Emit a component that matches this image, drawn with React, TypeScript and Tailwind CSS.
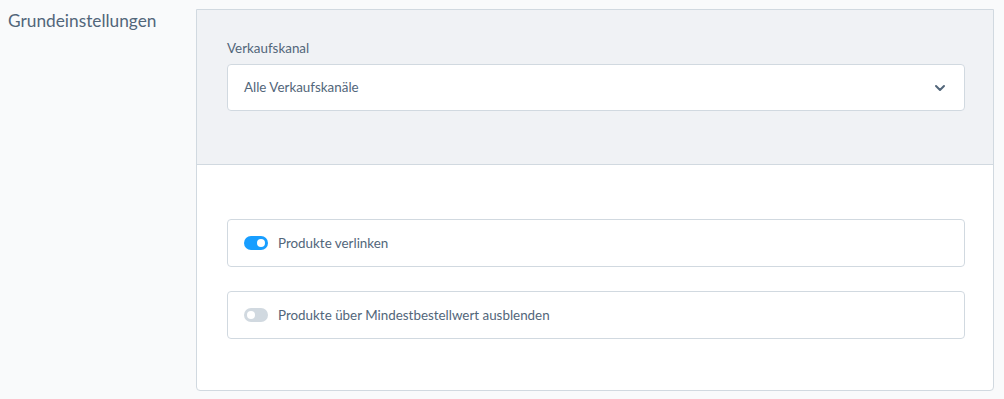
import React from "react";

function Toggle({ on }: { on: boolean }) {
  return (
    <span
      className={
        "relative inline-flex h-[14px] w-[24px] shrink-0 items-center rounded-full " +
        (on ? "bg-[#189eff]" : "bg-[#d1d9e0]")
      }
    >
      <span
        className={
          "absolute top-[3px] h-[8px] w-[8px] rounded-full bg-white " +
          (on ? "left-[13px]" : "left-[3px]")
        }
      />
    </span>
  );
}

function ToggleRow({ on, label }: { on: boolean; label: string }) {
  return (
    <div className="flex h-[48px] items-center gap-[10px] rounded-[4px] border border-[#d1d9e0] bg-white px-[16px]">
      <Toggle on={on} />
      <span className="text-[13.4px] text-[#52667a]">{label}</span>
    </div>
  );
}

export default function App() {
  return (
    <div
      className="flex h-[399px] w-[1004px] bg-[#f9fafb] pt-[9px]"
      style={{ fontFamily: "Lato, 'Noto Sans', sans-serif" }}
    >
      <div className="w-[196px] shrink-0 pl-[8px] pt-[1px]">
        <h2 className="text-[17.3px] leading-[22px] text-[#52667a]">Grundeinstellungen</h2>
      </div>
      <div className="flex h-[382px] w-[798px] flex-col overflow-hidden rounded-b-[4px] border border-[#d1d9e0] bg-white">
        <div className="h-[155px] shrink-0 border-b border-[#d1d9e0] bg-[#f0f2f5] pl-[30px] pr-[28px] pt-[29px]">
          <div className="mb-[7px] text-[13.4px] leading-[18px] text-[#52667a]">Verkaufskanal</div>
          <div className="flex h-[47px] items-center justify-between rounded-[4px] border border-[#d1d9e0] bg-white pl-[16px] pr-[18px]">
            <span className="text-[13.4px] text-[#52667a]">Alle Verkaufskanäle</span>
            <svg width="12" height="8" viewBox="0 0 12 8" fill="none">
              <path d="M2 2 L6 6 L10 2" stroke="#52667a" strokeWidth="2" strokeLinecap="round" strokeLinejoin="round" />
            </svg>
          </div>
        </div>
        <div className="flex flex-col gap-[24px] pl-[30px] pr-[28px] pt-[54px]">
          <ToggleRow on={true} label="Produkte verlinken" />
          <ToggleRow on={false} label="Produkte über Mindestbestellwert ausblenden" />
        </div>
      </div>
    </div>
  );
}
